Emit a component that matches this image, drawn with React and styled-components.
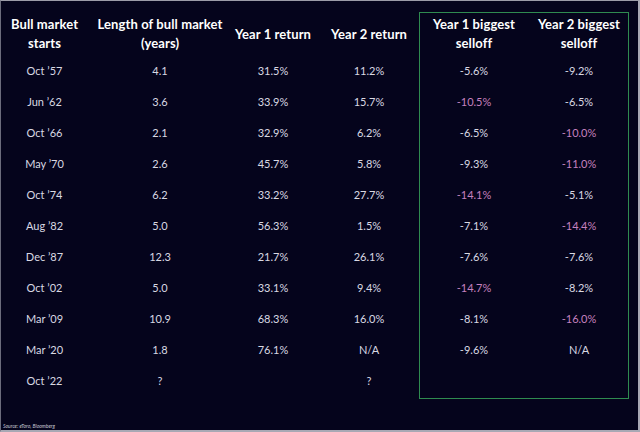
import React from 'react';
import styled, { createGlobalStyle } from 'styled-components';

const GlobalStyle = createGlobalStyle`
  html, body {
    margin: 0;
    padding: 0;
    background: #05041c;
  }
  * { box-sizing: border-box; }
`;

const Frame = styled.div`
  width: 640px;
  height: 432px;
  display: flex;
  flex-direction: column;
  background: #05041c;
  border-top: 1px solid #9c9ca8;
  border-left: 1px solid #6c6c7c;
  border-right: 2px solid #a8a8b4;
  border-bottom: 2px solid #a8a8b4;
  font-family: Lato, "Noto Sans", sans-serif;
  overflow: hidden;
`;

const Table = styled.div`
  display: grid;
  grid-template-columns: 87px 144px 82px 105px 110px 100px;
  grid-template-rows: 43px repeat(11, 31px) 3px;
  margin-top: 11px;
`;

const Highlight = styled.div`
  grid-column: 5 / 7;
  grid-row: 1 / -1;
  border: 1px solid #2f8b50;
`;

const HeadCell = styled.div`
  grid-column: ${p => p.$col};
  grid-row: 1;
  display: flex;
  align-items: center;
  justify-content: center;
  text-align: center;
  color: #ffffff;
  font-weight: 700;
  font-size: 13px;
  letter-spacing: 0.1px;
  line-height: 19px;
  white-space: nowrap;
  padding-left: ${p => (p.$col === 4 ? '5px' : '0')};
  padding-top: 1px;
`;

const Cell = styled.div`
  grid-column: ${p => p.$col};
  grid-row: ${p => p.$row};
  display: flex;
  align-items: center;
  justify-content: center;
  color: ${p => (p.$hot ? '#c681bf' : '#d9d9e3')};
  font-size: 11px;
  white-space: pre;
  padding-left: ${p => (p.$col === 4 ? '5px' : '0')};
`;

const Source = styled.div`
  margin-top: auto;
  padding: 0 0 1px 2px;
  color: #c8c8d4;
  font-size: 5px;
  font-style: italic;
  line-height: 6px;
`;

const headers = [
  ['Bull market', 'starts'],
  ['Length of bull market', '(years)'],
  ['Year 1 return'],
  ['Year 2 return'],
  ['Year 1 biggest', 'selloff'],
  ['Year 2 biggest', 'selloff'],
];

const rows = [
  ['Oct \u201957', '4.1', '31.5%', '11.2%', '-5.6%', '-9.2%'],
  ['Jun \u201962', '3.6', '33.9%', '15.7%', '!-10.5%', '-6.5%'],
  ['Oct \u201966', '2.1', '32.9%', '6.2%', '-6.5%', '!-10.0%'],
  ['May \u201970', '2.6', '45.7%', '5.8%', '-9.3%', '!-11.0%'],
  ['Oct \u201974', '6.2', '33.2%', '27.7%', '!-14.1%', '-5.1%'],
  ['Aug \u201982', '5.0', '56.3%', '1.5%', '-7.1%', '!-14.4%'],
  ['Dec \u201987', '12.3', '21.7%', '26.1%', '-7.6%', '-7.6%'],
  ['Oct \u201902', '5.0', '33.1%', '9.4%', '!-14.7%', '-8.2%'],
  ['Mar \u201909', '10.9', '68.3%', '16.0%', '-8.1%', '!-16.0%'],
  ['Mar \u201920', '1.8', '76.1%', 'N/A', '-9.6%', 'N/A'],
  ['Oct \u201922', '?', '', '?', '', ''],
];

export default function App() {
  return (
    <>
      <GlobalStyle />
      <Frame>
        <Table>
          <Highlight />
          {headers.map((lines, i) => (
            <HeadCell key={i} $col={i + 1}>
              <div>
                {lines.map((l, j) => (
                  <div key={j}>{l}</div>
                ))}
              </div>
            </HeadCell>
          ))}
          {rows.map((row, r) =>
            row.map((v, c) => {
              const hot = v.startsWith('!');
              return (
                <Cell key={`${r}-${c}`} $row={r + 2} $col={c + 1} $hot={hot}>
                  {hot ? v.slice(1) : v}
                </Cell>
              );
            })
          )}
        </Table>
        <Source>Source: eToro, Bloomberg</Source>
      </Frame>
    </>
  );
}
